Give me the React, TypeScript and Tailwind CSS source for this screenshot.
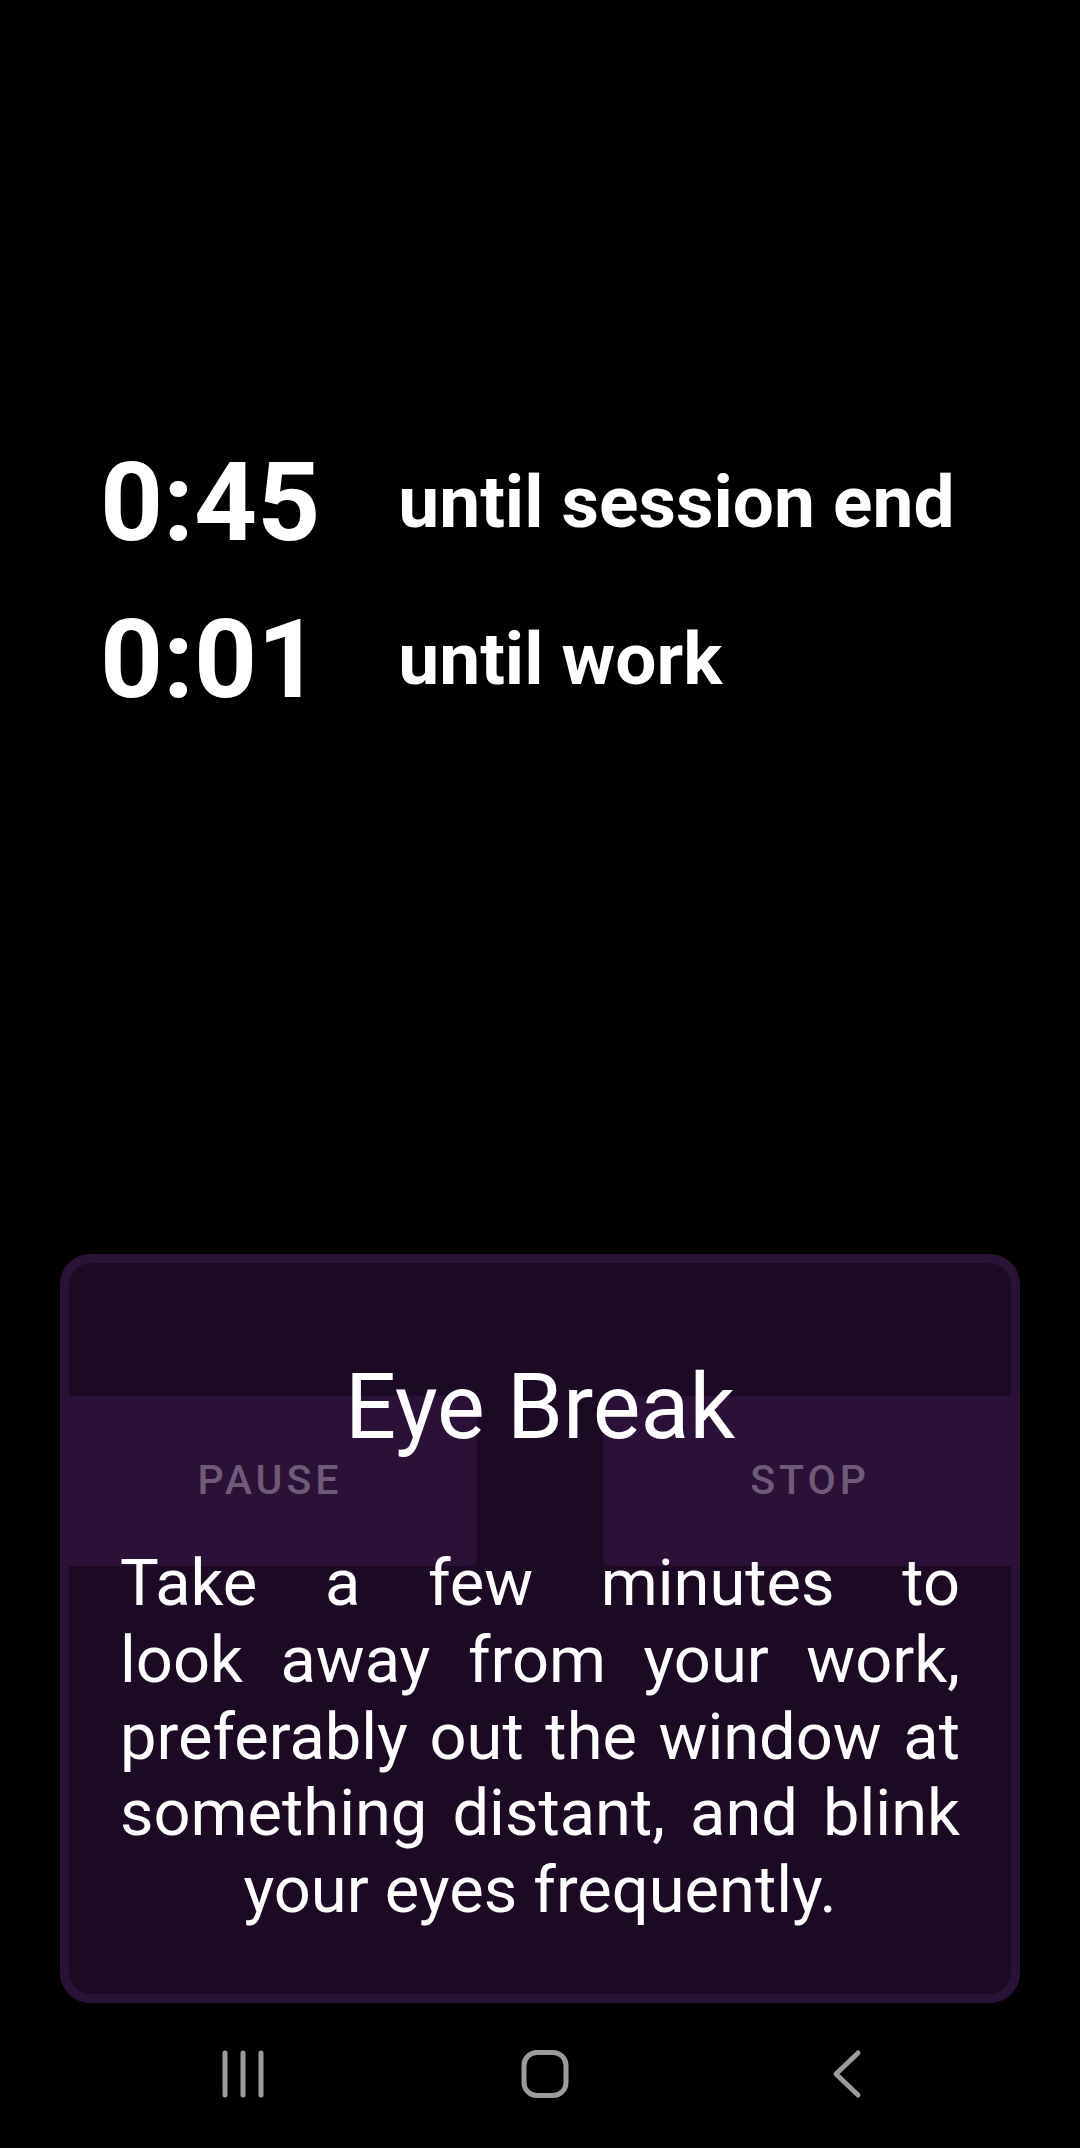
import React from "react";

const timers = [
  { time: "0:45", label: "until session end" },
  { time: "0:01", label: "until work" },
];

// line breaks as laid out by the app (balanced breaking)
const breakLines = [
  "Take a few minutes to",
  "look away from your work,",
  "preferably out the window at",
  "something distant, and blink",
];
const lastLine = "your eyes frequently.";

function RecentIcon() {
  return (
    <svg width="44" height="50" viewBox="0 0 44 50" fill="none" stroke="#9b9b9b" strokeWidth="5" strokeLinecap="round">
      <line x1="4" y1="4" x2="4" y2="46" />
      <line x1="22" y1="4" x2="22" y2="46" />
      <line x1="40" y1="4" x2="40" y2="46" />
    </svg>
  );
}

function HomeIcon() {
  return (
    <svg width="50" height="50" viewBox="0 0 50 50" fill="none" stroke="#9b9b9b" strokeWidth="5">
      <rect x="4" y="3.5" width="42" height="43" rx="13" />
    </svg>
  );
}

function BackIcon() {
  return (
    <svg width="32" height="50" viewBox="0 0 32 50" fill="none" stroke="#9b9b9b" strokeWidth="5" strokeLinecap="round" strokeLinejoin="round">
      <polyline points="27,4 5,25 27,46" />
    </svg>
  );
}

export default function App() {
  return (
    <div className="flex h-[2148px] w-[1080px] flex-col bg-black font-['Roboto','Liberation_Sans',sans-serif] text-white">
      {/* Timers */}
      <div className="grid grid-cols-[auto_1fr] items-center gap-x-[78px] pl-[100px] pt-[424px]">
        {timers.map((t) => (
          <React.Fragment key={t.time}>
            <span className="text-[110px] font-bold leading-[157px]">{t.time}</span>
            <span className="text-[73px] font-bold">{t.label}</span>
          </React.Fragment>
        ))}
      </div>

      {/* Break dialog */}
      <div className="mx-[60px] mt-auto grid rounded-[30px] bg-[#2a1236]">
        <div className="col-start-1 row-start-1 m-[9px] rounded-[22px] bg-[#1c0a24]" />

        <div className="col-start-1 row-start-1 mt-[142px] grid h-[170px] grid-cols-2 gap-x-[126px] self-start px-[3px]">
          <div className="flex items-center justify-center rounded-b-[8px] bg-[#2b1138] text-[41px] font-medium tracking-[4px] text-[#6f5a7a]">
            PAUSE
          </div>
          <div className="flex items-center justify-center rounded-b-[8px] bg-[#2b1138] text-[41px] font-medium tracking-[4px] text-[#6f5a7a]">
            STOP
          </div>
        </div>

        <div className="relative col-start-1 row-start-1 px-[60px] pb-[74px] pt-[102px]">
          <h1 className="text-center text-[90px] leading-[103px]">Eye Break</h1>
          <p className="mt-[86px] text-[65px] leading-[76.8px]">
            {breakLines.map((l) => (
              <span key={l} className="block text-justify [text-align-last:justify]">
                {l}
              </span>
            ))}
            <span className="block text-center">{lastLine}</span>
          </p>
        </div>
      </div>

      {/* Navigation bar */}
      <div className="flex h-[145px] items-center justify-center pb-[3px] pl-[10px]">
        <div className="flex w-[302px] justify-center">
          <RecentIcon />
        </div>
        <div className="flex w-[302px] justify-center">
          <HomeIcon />
        </div>
        <div className="flex w-[302px] justify-center">
          <BackIcon />
        </div>
      </div>
    </div>
  );
}
